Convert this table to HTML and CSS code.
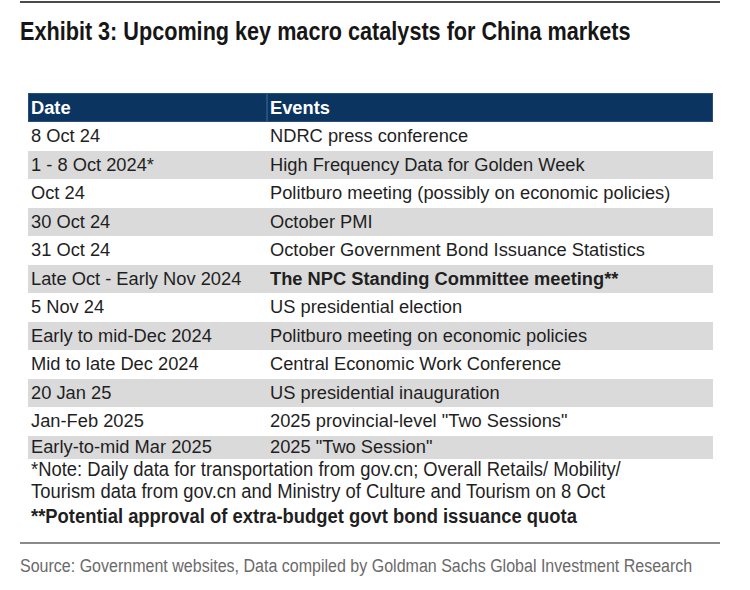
FILE: index.html
```html
<!DOCTYPE html>
<html>
<head>
<meta charset="utf-8">
<link rel="stylesheet" href="styles.css">
</head>
<body>
<div class="page">
  <div class="top-rule"></div>
  <h1 class="title"><span class="narrow">Exhibit 3: Upcoming key macro catalysts for China markets</span></h1>
  <table class="cat">
    <thead>
      <tr><th class="c1">Date</th><th>Events</th></tr>
    </thead>
    <tbody>
      <tr><td class="c1">8 Oct 24</td><td>NDRC press conference</td></tr>
      <tr class="alt"><td class="c1">1 - 8 Oct 2024*</td><td>High Frequency Data for Golden Week</td></tr>
      <tr><td class="c1">Oct 24</td><td>Politburo meeting (possibly on economic policies)</td></tr>
      <tr class="alt"><td class="c1">30 Oct 24</td><td>October PMI</td></tr>
      <tr><td class="c1">31 Oct 24</td><td>October Government Bond Issuance Statistics</td></tr>
      <tr class="alt"><td class="c1">Late Oct - Early Nov 2024</td><td class="b">The NPC Standing Committee meeting**</td></tr>
      <tr><td class="c1">5 Nov 24</td><td>US presidential election</td></tr>
      <tr class="alt"><td class="c1">Early to mid-Dec 2024</td><td>Politburo meeting on economic policies</td></tr>
      <tr><td class="c1">Mid to late Dec 2024</td><td>Central Economic Work Conference</td></tr>
      <tr class="alt"><td class="c1">20 Jan 25</td><td>US presidential inauguration</td></tr>
      <tr><td class="c1">Jan-Feb 2025</td><td>2025 provincial-level "Two Sessions"</td></tr>
      <tr class="alt last"><td class="c1">Early-to-mid Mar 2025</td><td>2025 "Two Session"</td></tr>
    </tbody>
  </table>
  <div class="notes">
    <p class="note"><span class="narrow">*Note: Daily data for transportation from gov.cn; Overall Retails/ Mobility/</span></p>
    <p class="note"><span class="narrow">Tourism data from gov.cn and Ministry of Culture and Tourism on 8 Oct</span></p>
    <p class="note strong"><span class="narrow">**Potential approval of extra-budget govt bond issuance quota</span></p>
  </div>
  <div class="bottom-rule"></div>
  <p class="source"><span class="narrow">Source: Government websites, Data compiled by Goldman Sachs Global Investment Research</span></p>
</div>
</body>
</html>
```

FILE: styles.css
```css
html, body {
  margin: 0;
  padding: 0;
  background: #ffffff;
}
.page {
  width: 750px;
  height: 590px;
  padding-top: 1px;
  box-sizing: border-box;
  overflow: hidden;
}
.narrow {
  display: inline-block;
  white-space: nowrap;
  transform-origin: left center;
}
.top-rule {
  margin: 0 30px 0 20px;
  height: 2px;
  background: #4a4a4a;
}
.title {
  margin: 14px 0 0 20px;
  font-family: "Liberation Sans", Arial, sans-serif;
  font-weight: bold;
  font-size: 25px;
  line-height: 28px;
  color: #161616;
}
.title .narrow {
  transform: scaleX(0.865);
}
.cat {
  margin: 48px 0 0 28px;
  width: 685px;
  border-collapse: collapse;
  font-family: "Liberation Sans", Arial, sans-serif;
  font-size: 18.3px;
  color: #1f1f1f;
}
.cat th {
  background: #0b3461;
  color: #ffffff;
  font-weight: bold;
  text-align: left;
  height: 29px;
  padding: 0 0 0 3px;
  box-shadow: inset 0 0 0 1px #2a4f7a;
}
.cat td {
  height: 28.5px;
  padding: 0 0 0 3px;
  white-space: nowrap;
}
.cat .c1 {
  width: 236px;
}
.cat tr.alt td {
  background: #dadada;
}
.cat tr.last td {
  height: 23px;
}
.cat td.b {
  font-weight: bold;
}
.notes {
  margin: -1px 0 0 31px;
}
.note {
  margin: 0;
  font-family: "Liberation Sans", Arial, sans-serif;
  font-size: 20px;
  line-height: 22px;
  color: #1f1f1f;
}
.note .narrow {
  transform: scaleX(0.92);
}
.note.strong {
  font-weight: bold;
  margin-top: 3px;
}
.bottom-rule {
  margin: 15px 30px 0 20px;
  height: 2px;
  background: #8a8a8a;
}
.source {
  margin: 11px 0 0 20px;
  font-family: "Liberation Sans", Arial, sans-serif;
  font-size: 18px;
  line-height: 22px;
  color: #6a6a6a;
}
.source .narrow {
  transform: scaleX(0.89);
}
```
